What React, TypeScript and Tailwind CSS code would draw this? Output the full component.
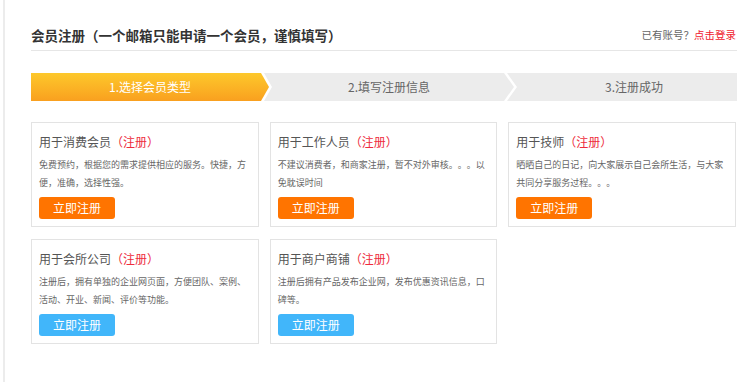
import React from 'react'

const font = "font-['Noto_Sans_CJK_SC','Liberation_Sans',sans-serif]"

type Card = {
  title: string
  desc: string
  tone: 'orange' | 'blue'
}

const cards: Card[] = [
  { title: '用于消费会员', desc: '免费预约，根据您的需求提供相应的服务。快捷，方便，准确，选择性强。', tone: 'orange' },
  { title: '用于工作人员', desc: '不建议消费者，和商家注册，暂不对外审核。。。以免耽误时间', tone: 'orange' },
  { title: '用于技师', desc: '晒晒自己的日记，向大家展示自己会所生活，与大家共同分享服务过程。。。', tone: 'orange' },
  { title: '用于会所公司', desc: '注册后，拥有单独的企业网页面，方便团队、案例、活动、开业、新闻、评价等功能。', tone: 'blue' },
  { title: '用于商户商铺', desc: '注册后拥有产品发布企业网，发布优惠资讯信息，口碑等。', tone: 'blue' },
]

function TypeCard({ card }: { card: Card }) {
  return (
    <div className="border border-[#e3e3e3] bg-white px-[7px] pt-[8px] pb-[7px]">
      <h3 className="text-[12px] leading-[22px] text-[#555]">
        {card.title}
        <span className="text-[#ee2c3c]">（注册）</span>
      </h3>
      <p className="mt-[3px] text-[9px] leading-[18px] text-[#666]">{card.desc}</p>
      <button
        className={
          'mt-[5px] flex h-[22px] w-[76px] items-center justify-center rounded-[3px] text-[12px] text-white ' +
          (card.tone === 'orange' ? 'bg-[#ff7400]' : 'bg-[#41b6fa]')
        }
      >
        立即注册
      </button>
    </div>
  )
}

export default function App() {
  return (
    <div className={`${font} h-[382px] bg-white pl-[3px] [text-spacing-trim:space-all]`}>
      <div className="h-full border-l-2 border-[#ececec] pl-[26px] pr-[13px] pt-[25px]">
        <div className="flex items-center justify-between border-b border-[#e6e6e6] pb-[5px]">
          <h1 className="text-[13.5px] font-bold leading-[20px] text-[#333]">
            会员注册（一个邮箱只能申请一个会员，谨慎填写）
          </h1>
          <div className="mr-[1px] text-[10.5px] leading-[20px] text-[#666]">
            已有账号？<a className="text-[#f0202e]">点击登录</a>
          </div>
        </div>

        <div className="mt-[22px] flex h-[28px] text-[12px]">
          <div className="flex w-[238px] shrink-0 items-center justify-center bg-gradient-to-b from-[#fdc82b] to-[#f9a01f] text-white [clip-path:polygon(0_0,calc(100%_-_8px)_0,100%_50%,calc(100%_-_8px)_100%,0_100%)]">
            1.选择会员类型
          </div>
          <div className="-ml-[5px] flex w-[250px] shrink-0 items-center justify-center bg-[#ececec] text-[#666] [clip-path:polygon(0_0,calc(100%_-_10px)_0,100%_50%,calc(100%_-_10px)_100%,0_100%,8px_50%)]">
            2.填写注册信息
          </div>
          <div className="-ml-[7px] flex flex-1 items-center justify-center bg-[#ececec] pl-[24px] text-[#666] [clip-path:polygon(0_0,100%_0,100%_100%,0_100%,10px_50%)]">
            3.注册成功
          </div>
        </div>

        <div className="mt-[21px] grid w-[705px] grid-cols-3 gap-x-[11px] gap-y-[12px]">
          {cards.map((c) => (
            <TypeCard key={c.title} card={c} />
          ))}
        </div>
      </div>
    </div>
  )
}
